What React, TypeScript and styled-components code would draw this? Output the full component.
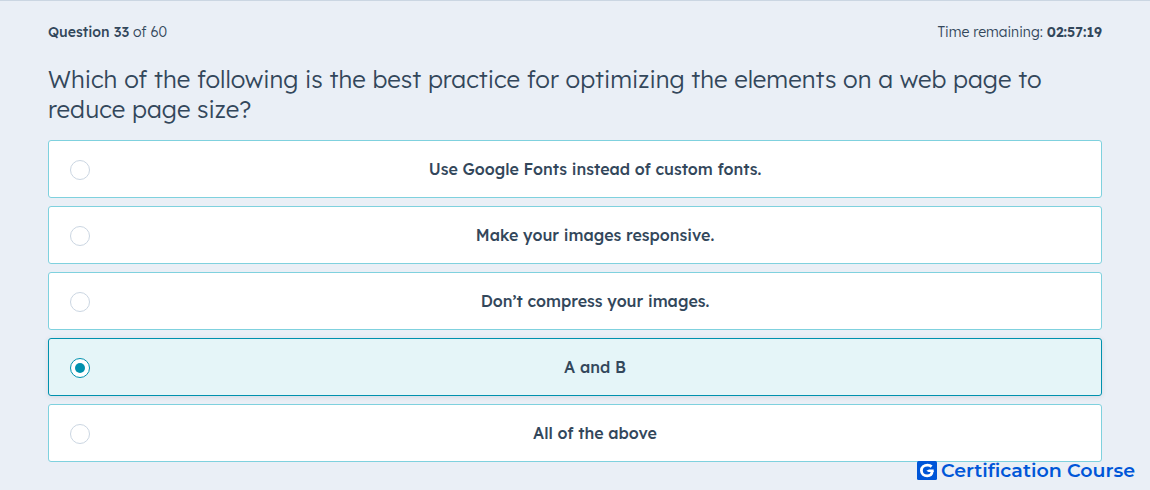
import React, { useState } from "react";
import styled, { createGlobalStyle } from "styled-components";

const GlobalStyle = createGlobalStyle`
  *, *::before, *::after { box-sizing: border-box; }
  body {
    margin: 0;
    background: #eaeff6;
    color: #33475b;
    font-family: "Lexend Deca", Lexend, Inter, "Liberation Sans", sans-serif;
    font-weight: 300;
  }
`;

const Page = styled.main`
  position: relative;
  padding: 23px 48px 28px;
  border-top: 1px solid #cbd6e2;
`;

const StatusBar = styled.header`
  display: flex;
  justify-content: space-between;
  font-size: 14px;
  line-height: 16px;
`;

const Counter = styled.strong`
  font-weight: 500;
`;

const Timer = styled.strong`
  font-weight: 600;
`;

const Quiz = styled.fieldset`
  min-width: 0;
  margin: 0;
  padding: 0;
  border: 0;
`;

const Prompt = styled.legend`
  padding: 24px 0 16px;
  font-size: 24px;
  line-height: 30px;
`;

const Options = styled.div`
  display: grid;
  gap: 8px;
`;

const Option = styled.label<{ $selected: boolean }>`
  display: flex;
  align-items: center;
  gap: 20px;
  min-height: 58px;
  padding: 0 21px;
  border: 1px solid ${(p) => (p.$selected ? "#0091ae" : "#7fd1de")};
  border-radius: 3px;
  background: ${(p) => (p.$selected ? "#e5f5f8" : "#ffffff")};
  box-shadow: ${(p) => (p.$selected ? "0 1px 5px rgba(45, 62, 80, 0.12)" : "none")};
  cursor: pointer;
`;

const Radio = styled.input`
  appearance: none;
  flex: none;
  display: grid;
  place-items: center;
  width: 20px;
  height: 20px;
  margin: 2px 0 0;
  border: 1px solid #cbd6e2;
  border-radius: 50%;
  background: #ffffff;

  &:checked {
    border-color: #0091ae;
  }

  &:checked::before {
    content: "";
    width: 10px;
    height: 10px;
    border-radius: 50%;
    background: #0091ae;
  }
`;

const OptionText = styled.span`
  flex: 1;
  text-align: center;
  font-size: 16px;
  line-height: 24px;
  font-weight: 500;
`;

const Brand = styled.div`
  position: absolute;
  right: 15px;
  bottom: 8px;
  display: flex;
  align-items: center;
  gap: 4px;
  color: #0056d8;
  font-family: Montserrat, Inter, sans-serif;
  font-size: 19px;
  line-height: 22px;
  font-weight: 600;
`;

const answers = [
  "Use Google Fonts instead of custom fonts.",
  "Make your images responsive.",
  "Don’t compress your images.",
  "A and B",
  "All of the above",
];

function BrandMark() {
  return (
    <svg width="20" height="20" viewBox="0 0 20 20" aria-hidden="true">
      <rect width="20" height="19" rx="1.5" fill="#0056d8" />
      <path
        d="M14.6 5.6C13.5 4.6 12.2 4.2 10.6 4.2C7 4.2 4.4 6.4 4.4 9.5C4.4 12.8 6.9 14.9 10.2 14.9C13.2 14.9 15 13.3 15.2 10"
        fill="none"
        stroke="#fff"
        strokeWidth="2.8"
      />
      <path d="M9.4 9.8L12 8.6H16.7V11H11.6Z" fill="#fff" />
    </svg>
  );
}

export default function App() {
  const [selected, setSelected] = useState(3);
  return (
    <>
      <GlobalStyle />
      <Page>
        <StatusBar>
          <span>
            <Counter>Question 33</Counter> of 60
          </span>
          <span>
            Time remaining: <Timer>02:57:19</Timer>
          </span>
        </StatusBar>
        <Quiz>
          <Prompt>
            Which of the following is the best practice for optimizing the elements on a web page to
            reduce page size?
          </Prompt>
          <Options>
            {answers.map((answer, index) => (
              <Option key={answer} $selected={selected === index}>
                <Radio
                  type="radio"
                  name="answer"
                  checked={selected === index}
                  onChange={() => setSelected(index)}
                />
                <OptionText>{answer}</OptionText>
              </Option>
            ))}
          </Options>
        </Quiz>
        <Brand>
          <BrandMark />
          <span>Certification Course</span>
        </Brand>
      </Page>
    </>
  );
}
